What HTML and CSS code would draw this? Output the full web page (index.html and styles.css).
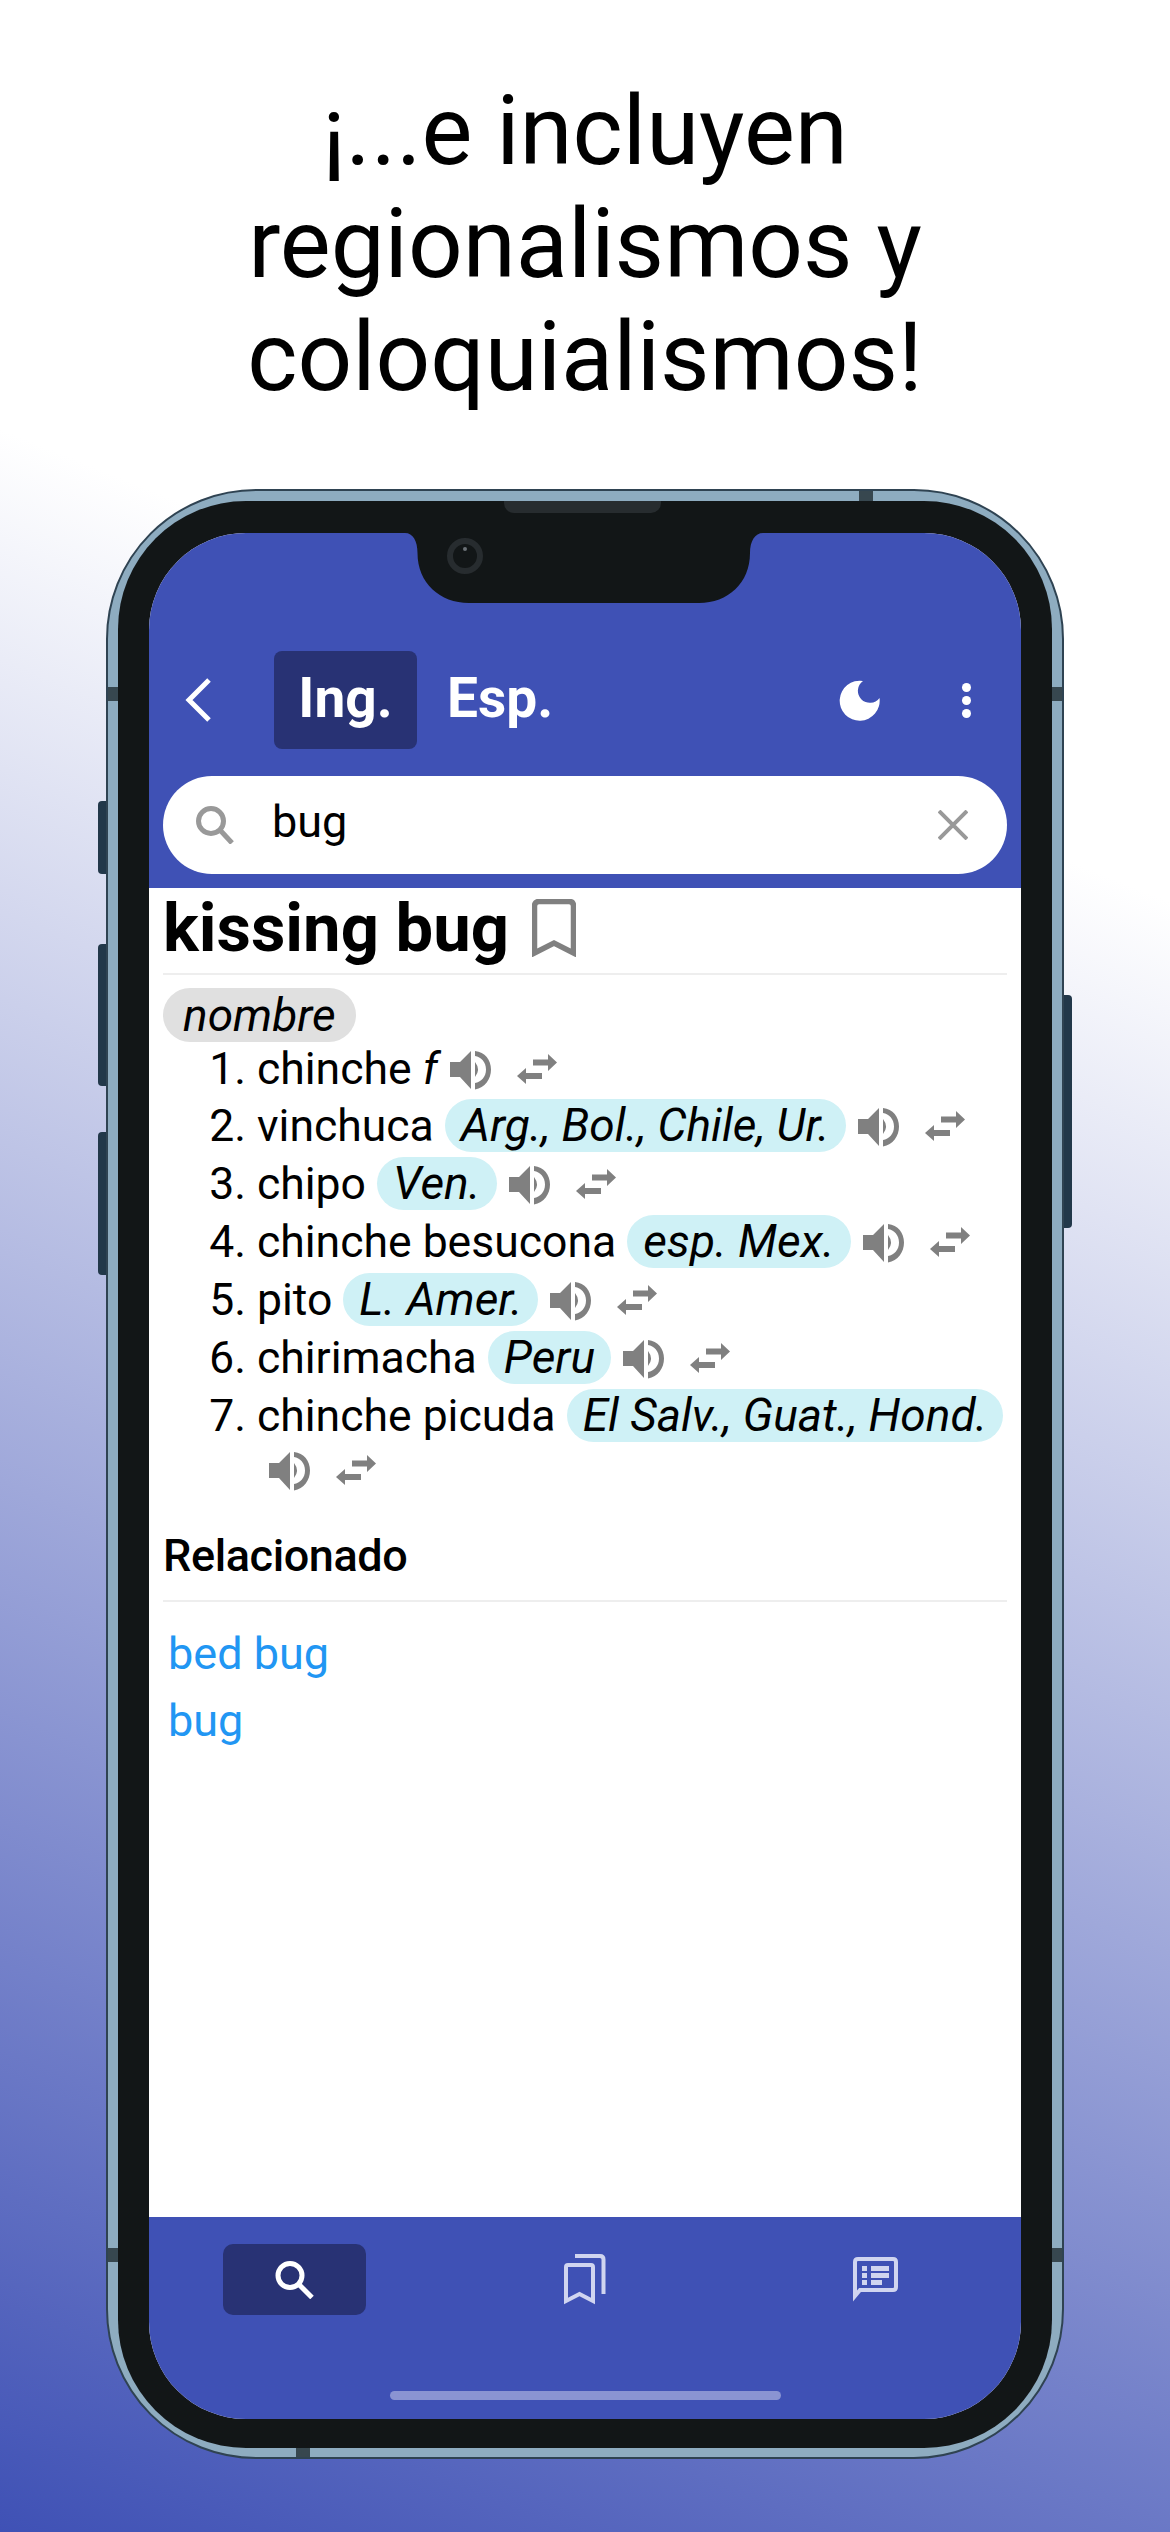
FILE: index.html
```html
<!DOCTYPE html>
<html lang="es">

<head>
  <meta charset="UTF-8" />
  <meta name="viewport" content="width=device-width, initial-scale=1" />
  <title>Regionalismos y coloquialismos</title>
  <link rel="stylesheet" href="styles.css">
</head>

<body>
  <svg class="icon-defs" aria-hidden="true">
    <symbol id="speaker" viewBox="0 0 41 40">
      <path d="M0 12H10L21 1V39L10 27H0Z" />
      <path d="M25 12Q31 19.5 25 27Z" />
      <path d="M25 1C35 2 41 10 41 19.5C41 29 35 38 25 39.500V33C31 32 36 27 36 19.500C36 12 31 7 25 6Z" />
    </symbol>
    <symbol id="swap" viewBox="0 0 40 30">
      <path d="M16 5.500H31V0L40 8.500L31 17V11.500H16Z" />
      <path d="M25 19H9V14L0 22L9 30V25H25Z" />
    </symbol>
  </svg>

  <h1 class="headline">¡...e incluyen<br>regionalismos y<br>coloquialismos!</h1>

  <div class="phone">
    <span class="side-btn side-mute"></span>
    <span class="side-btn side-up"></span>
    <span class="side-btn side-down"></span>
    <span class="side-btn side-power"></span>
    <span class="tick tick-left-top"></span>
    <span class="tick tick-right-top"></span>
    <span class="tick tick-left-bottom"></span>
    <span class="tick tick-right-bottom"></span>
    <span class="tick tick-top"></span>
    <span class="tick tick-bottom"></span>

    <div class="bezel">
      <span class="earpiece"></span>
      <span class="camera"></span>

      <div class="screen">
        <svg class="notch" viewBox="0 0 358 70" aria-hidden="true">
          <path d="M0 0C8 0 12.500 8 12.500 20C12.500 50 35 70 64 70H294C323 70 345 50 345 20C345 8 350 0 358 0Z" />
        </svg>

        <header class="app-bar">
          <div class="toolbar">
            <svg class="back-icon" viewBox="0 0 26 44" aria-hidden="true">
              <path d="M24 2L4 22L24 42" />
            </svg>
            <button class="lang-btn lang-active">Ing.</button>
            <button class="lang-btn">Esp.</button>
            <svg class="moon-icon" viewBox="0 0 41 41" aria-hidden="true">
              <path d="M24 1A20 20 0 1 0 40.500 18A12 12 0 1 1 24 1Z" />
            </svg>
            <span class="menu-dots"><i></i><i></i><i></i></span>
          </div>

          <div class="search-bar">
            <svg class="search-icon" viewBox="0 0 38 38" aria-hidden="true">
              <circle cx="15" cy="15" r="12.500" />
              <path d="M24 24L36 37" />
            </svg>
            <span class="search-text">bug</span>
            <svg class="clear-icon" viewBox="0 0 30 30" aria-hidden="true">
              <path d="M1 1L29 29M29 1L1 29" />
            </svg>
          </div>
        </header>

        <main class="entry">
          <div class="entry-title">
            <h2>kissing bug</h2>
            <svg class="bookmark-icon" viewBox="0 0 44 58" aria-hidden="true">
              <path d="M2.500 54V7Q2.500 2.500 7 2.500H37Q41.500 2.500 41.500 7V54L22 44Z" />
            </svg>
          </div>

          <span class="pos">nombre</span>

          <ol class="senses">
            <li class="sense-plain">chinche <em>f</em><span class="actions"><svg class="speaker"><use href="#speaker" /></svg><svg class="swap"><use href="#swap" /></svg></span></li>
            <li>vinchuca <span class="tag">Arg., Bol., Chile, Ur.</span><span class="actions"><svg class="speaker"><use href="#speaker" /></svg><svg class="swap"><use href="#swap" /></svg></span></li>
            <li>chipo <span class="tag">Ven.</span><span class="actions"><svg class="speaker"><use href="#speaker" /></svg><svg class="swap"><use href="#swap" /></svg></span></li>
            <li>chinche besucona <span class="tag">esp. Mex.</span><span class="actions"><svg class="speaker"><use href="#speaker" /></svg><svg class="swap"><use href="#swap" /></svg></span></li>
            <li>pito <span class="tag">L. Amer.</span><span class="actions"><svg class="speaker"><use href="#speaker" /></svg><svg class="swap"><use href="#swap" /></svg></span></li>
            <li>chirimacha <span class="tag">Peru</span><span class="actions"><svg class="speaker"><use href="#speaker" /></svg><svg class="swap"><use href="#swap" /></svg></span></li>
            <li>chinche picuda <span class="tag">El Salv., Guat., Hond.</span> <span class="actions"><svg class="speaker"><use href="#speaker" /></svg><svg class="swap"><use href="#swap" /></svg></span></li>
          </ol>

          <h3 class="related-title">Relacionado</h3>
          <a class="related-link" href="#">bed bug</a>
          <a class="related-link" href="#">bug</a>
        </main>

        <nav class="bottom-nav">
          <div class="nav-items">
            <button class="nav-btn nav-active">
              <svg class="nav-search" viewBox="0 0 39 38" aria-hidden="true">
                <circle cx="15" cy="14.500" r="12" />
                <path d="M23.500 23L37 36.500" />
              </svg>
            </button>
            <button class="nav-btn">
              <svg class="nav-bookmarks" viewBox="0 0 42 51" aria-hidden="true">
                <path d="M2 47V13Q2 11 4 11H27Q29 11 29 13V47L15.500 40Z" />
                <path d="M11 2H36Q39.500 2 39.500 5.500V40" />
              </svg>
            </button>
            <button class="nav-btn">
              <svg class="nav-chat" viewBox="0 0 45 46" aria-hidden="true">
                <path class="chat-outline" d="M2 39V5Q2 2 5 2H40Q43 2 43 5V30Q43 33 40 33H7Z" />
                <path class="chat-lines" d="M9 9H14V14H9ZM18 9H36V14H18ZM9 16H14V21H9ZM18 16H36V21H18ZM9 23H14V28H9ZM18 23H29V28H18Z" />
              </svg>
            </button>
          </div>
          <span class="home-bar"></span>
        </nav>
      </div>
    </div>
  </div>
</body>

</html>
```

FILE: styles.css
```css
* {
  box-sizing: border-box;
}

html, body {
  margin: 0;
  padding: 0;
}

body {
  width: 1170px;
  height: 2532px;
  overflow: hidden;
  font-family: Roboto, "Liberation Sans", sans-serif;
  color: #000;
  background: linear-gradient(202deg, #fff 30%, #3f51b5 100%);
}

.icon-defs {
  display: none;
}

.headline {
  margin: 0;
  height: 489px;
  padding-top: 75px;
  font-size: 96px;
  font-weight: 400;
  line-height: 113px;
  text-align: center;
}

/* phone body */
.phone {
  position: relative;
  width: 958px;
  height: 1970px;
  margin-left: 106px;
  padding: 10px 10px 9px;
  border: 2px solid #2f4352;
  border-radius: 150px;
  background-color: #8eacc0;
}

.bezel {
  position: relative;
  height: 100%;
  padding: 32px 31px 29px;
  border-radius: 128px;
  background-color: #121617;
}

.side-btn {
  position: absolute;
  width: 8px;
  left: -10px;
  border-radius: 4px 0 0 4px;
  background-color: #22384a;
}

.side-mute { top: 310px; height: 73px; }
.side-up { top: 453px; height: 142px; }
.side-down { top: 641px; height: 143px; }

.side-power {
  left: auto;
  right: -10px;
  top: 504px;
  height: 233px;
  border-radius: 0 4px 4px 0;
}

.tick {
  position: absolute;
  background-color: #37474f;
}

.tick-left-top, .tick-left-bottom, .tick-right-top, .tick-right-bottom {
  width: 11px;
  height: 14px;
}

.tick-left-top, .tick-left-bottom { left: 0; }
.tick-right-top, .tick-right-bottom { right: 0; }
.tick-left-top, .tick-right-top { top: 196px; }
.tick-left-bottom, .tick-right-bottom { top: 1757px; }

.tick-top, .tick-bottom {
  width: 14px;
  height: 11px;
}

.tick-top { top: 0; left: 751px; }
.tick-bottom { bottom: 0; left: 188px; }

.earpiece {
  position: absolute;
  top: 0;
  left: 386px;
  width: 157px;
  height: 12px;
  border-radius: 0 0 10px 10px;
  background-color: #272c2f;
}

.camera {
  position: absolute;
  z-index: 2;
  top: 37px;
  left: 329px;
  width: 36px;
  height: 36px;
  border: 6px solid #272c2f;
  border-radius: 50%;
}

.camera::after {
  content: "";
  position: absolute;
  top: 3px;
  left: 10px;
  width: 4px;
  height: 4px;
  border-radius: 50%;
  background-color: #6b7176;
}

/* screen */
.screen {
  position: relative;
  display: flex;
  flex-direction: column;
  height: 100%;
  overflow: hidden;
  border-radius: 97px;
  background-color: #fff;
}

.notch {
  position: absolute;
  top: 0;
  left: 256px;
  width: 358px;
  height: 70px;
  fill: #121617;
}

.app-bar {
  height: 355px;
  padding: 118px 14px 0;
  background-color: #3f51b5;
}

.toolbar {
  display: flex;
  align-items: center;
  height: 98px;
}

.back-icon {
  width: 26px;
  height: 44px;
  margin-left: 22px;
  fill: none;
  stroke: #fff;
  stroke-width: 5;
}

.lang-btn {
  height: 98px;
  padding: 0 30px 4px;
  border: none;
  border-radius: 8px;
  background: none;
  color: #fff;
  font-family: inherit;
  font-size: 55px;
  font-weight: 700;
}

.lang-active {
  width: 143px;
  margin-left: 63px;
  padding: 0 0 4px;
  background-color: #283274;
}

.moon-icon {
  width: 41px;
  height: 41px;
  margin-left: auto;
  fill: #fff;
}

.menu-dots {
  display: flex;
  flex-direction: column;
  gap: 4px;
  margin: 0 36px 0 82px;
}

.menu-dots i {
  width: 9px;
  height: 9px;
  border-radius: 50%;
  background-color: #fff;
}

.search-bar {
  display: flex;
  align-items: center;
  height: 98px;
  margin-top: 27px;
  padding: 0 39px 0 33px;
  border-radius: 49px;
  background-color: #fff;
}

.search-icon {
  width: 38px;
  height: 38px;
  fill: none;
  stroke: #999;
  stroke-width: 5;
}

.search-text {
  flex: 1;
  margin-left: 38px;
  margin-top: -8px;
  font-size: 45px;
}

.clear-icon {
  width: 30px;
  height: 30px;
  fill: none;
  stroke: #999;
  stroke-width: 4;
}

/* dictionary entry */
.entry {
  flex: 1;
  display: flex;
  flex-direction: column;
  align-items: flex-start;
  padding: 0 14px;
}

.entry-title {
  display: flex;
  align-items: center;
  align-self: stretch;
  height: 87px;
  padding-bottom: 5px;
  border-bottom: 2px solid #eee;
}

.entry-title h2 {
  margin: 0;
  font-size: 67px;
  font-weight: 700;
  line-height: 80px;
}

.bookmark-icon {
  width: 44px;
  height: 58px;
  margin-left: 23px;
  fill: none;
  stroke: #808080;
  stroke-width: 5.500;
}

.pos {
  margin-top: 13px;
  padding: 0 20px;
  border-radius: 27px;
  background-color: #e0e0e0;
  font-size: 46px;
  font-style: italic;
  line-height: 54px;
}

.senses {
  align-self: stretch;
  margin: -3px 0 0;
  padding: 0 0 0 94px;
  font-size: 44.500px;
  line-height: 50px;
}

.sense-plain {
  padding: 5px 0 3px;
}

.tag {
  display: inline-block;
  margin: 2px 0 3px;
  padding: 0 16px;
  border-radius: 27px;
  background-color: #cff1f6;
  font-size: 46px;
  font-style: italic;
  line-height: 53px;
}

.actions {
  white-space: nowrap;
}

.speaker {
  width: 41px;
  height: 40px;
  margin-left: 12px;
  fill: #808080;
  vertical-align: -6px;
}

.swap {
  width: 40px;
  height: 30px;
  margin-left: 26px;
  fill: #808080;
  vertical-align: 0;
}

.related-title {
  align-self: stretch;
  margin: 31px 0 0;
  padding-bottom: 14px;
  border-bottom: 2px solid #eee;
  font-size: 45px;
  font-weight: 500;
  letter-spacing: -0.400px;
  line-height: 60px;
}

.related-link {
  margin: 16px 0 -16px 5px;
  color: #2196f3;
  font-size: 45px;
  line-height: 67px;
  text-decoration: none;
}

.related-title + .related-link {
  margin-top: 18px;
}

/* bottom nav */
.bottom-nav {
  display: flex;
  flex-direction: column;
  align-items: center;
  height: 202px;
  background-color: #3f51b5;
}

.nav-items {
  display: grid;
  grid-template-columns: repeat(3, 1fr);
  justify-items: center;
  align-self: stretch;
  padding-top: 27px;
}

.nav-btn {
  display: flex;
  align-items: center;
  justify-content: center;
  width: 143px;
  height: 71px;
  padding: 0;
  border: none;
  border-radius: 10px;
  background: none;
}

.nav-active {
  background-color: #283274;
}

.nav-search {
  width: 39px;
  height: 38px;
  fill: none;
  stroke: #fff;
  stroke-width: 5;
}

.nav-bookmarks {
  width: 42px;
  height: 51px;
  fill: none;
  stroke: #d0d5f0;
  stroke-width: 4;
}

.nav-chat {
  width: 45px;
  height: 46px;
}

.chat-outline {
  fill: none;
  stroke: #d0d5f0;
  stroke-width: 4;
}

.chat-lines {
  fill: #d0d5f0;
}

.home-bar {
  width: 391px;
  height: 9px;
  margin-top: 76px;
  border-radius: 5px;
  background-color: #8a94d2;
}
```
